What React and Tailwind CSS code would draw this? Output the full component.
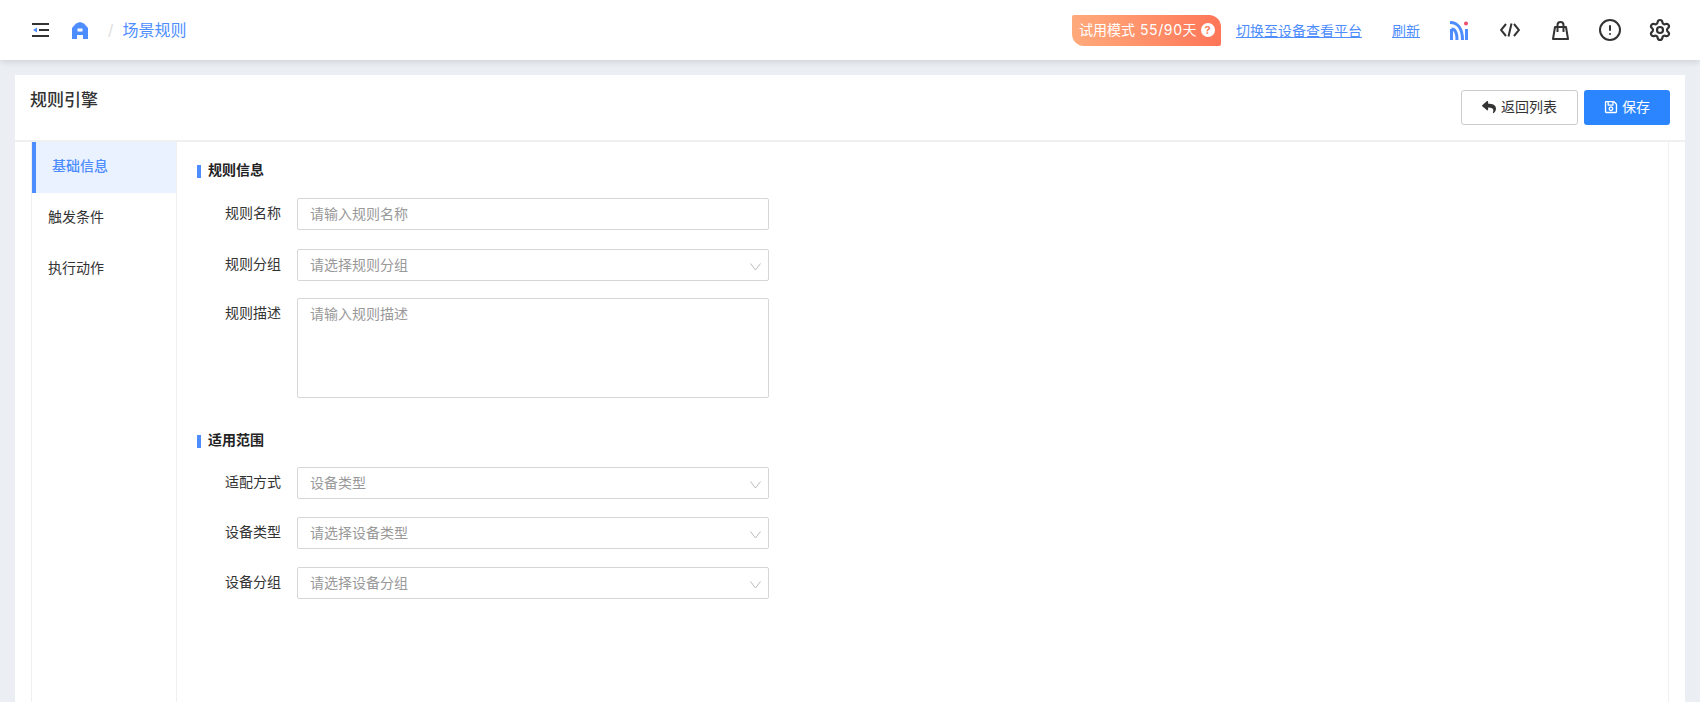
import { Settings, CircleAlert } from "lucide-react";
import { FaReply, FaRegSave } from "react-icons/fa";

const fontStyle = "font-['Inter','Noto_Sans_CJK_SC','Noto_Sans',sans-serif]";

const Field = ({ label, placeholder, select, className }) => (
  <div className={`flex items-start ${className}`}>
    <label className="w-[265px] pr-[16px] text-right text-[14px] leading-[30px] text-[#333]">{label}</label>
    <div className="relative w-[472px] h-[32px] border border-[#d6d6d6] rounded-[2px] pl-[12px] text-[14px] leading-[30px] text-[#999]">
      {placeholder}
      {select && (
        <svg className="absolute right-[7px] top-[13px]" width="11" height="8" viewBox="0 0 11 8" fill="none">
          <path d="M0.5 0.5 L5.5 7 L10.5 0.5" stroke="#bbb" strokeWidth="1" />
        </svg>
      )}
    </div>
  </div>
);

const SectionTitle = ({ children, className }) => (
  <div className={`flex items-center h-[20px] pl-[165px] text-[14px] font-bold text-[#222] ${className}`}>
    <span className="w-[4px] h-[13px] bg-[#4d8dff] mr-[7px]" />
    <span className="-mt-[3px]">{children}</span>
  </div>
);

export default function App() {
  return (
    <div className={`${fontStyle} h-[702px] overflow-hidden bg-[#ebeef3]`}>
      {/* top bar */}
      <header className="h-[60px] bg-white flex items-center shadow-[0_2px_6px_rgba(0,0,0,0.12)] relative">
        <svg className="ml-[32px]" width="17" height="14" viewBox="0 0 17 14">
          <rect x="0" y="0" width="17" height="2" fill="#333" />
          <rect x="7" y="6" width="10" height="2" fill="#333" />
          <rect x="0" y="12" width="17" height="2" fill="#333" />
          <path d="M1 7 L5 4.5 V9.5 Z" fill="#4d8dff" />
        </svg>
        <svg className="ml-[23px]" width="16" height="17" viewBox="0 0 16 17">
          <path fillRule="evenodd" d="M8 0 L12 1.5 L16 6 V17 H11 V13 H5 V17 H0 V6 L4 1.5 Z M5.5 6.5 H10.5 V9.5 H5.5 Z" fill="#4d8dff" />
        </svg>
        <span className="ml-[20px] text-[#ddd] text-[15px]">/</span>
        <span className="ml-[9px] text-[16px] text-[#4d8dff]">场景规则</span>

        <div className="ml-auto flex items-center">
          <div className="h-[31px] w-[149px] flex items-center pl-[7px] pb-[1px] rounded-tl-[2px] rounded-tr-[12px] rounded-bl-[12px] rounded-br-[2px] bg-gradient-to-r from-[#ffaa7c] to-[#ff7558] text-white text-[14px] whitespace-nowrap">
            试用模式<span className="ml-[5px] tracking-[0.6px]">55/90</span>天
            <span className="ml-[4px] w-[14px] h-[14px] rounded-full bg-white text-[#ff7e60] text-[11px] leading-[14px] font-bold text-center">?</span>
          </div>
          <a className="ml-[15px] text-[14px] text-[#4d8dff] underline">切换至设备查看平台</a>
          <a className="ml-[30px] text-[14px] text-[#4d8dff] underline">刷新</a>
          <svg className="ml-[30px]" width="18" height="19" viewBox="0 0 18 19" fill="none">
            <path d="M1.5 19 V8" stroke="#4d8dff" strokeWidth="3" />
            <path d="M0 1.5 C8 1.5 12.5 8 12.5 19" stroke="#4d8dff" strokeWidth="3" />
            <path d="M1.5 8 C5 8 7 12 7 19" stroke="#4d8dff" strokeWidth="3" />
            <path d="M16.5 8 V19" stroke="#4d8dff" strokeWidth="3" />
            <circle cx="16" cy="2.5" r="2" fill="#ef4d6c" />
          </svg>
          <svg className="ml-[32px]" width="20" height="14" viewBox="0 0 20 14" fill="none" stroke="#333" strokeWidth="2">
            <path d="M6 1 L1 7 L6 13" />
            <path d="M14 1 L19 7 L14 13" />
            <path d="M11.5 0.5 L8.5 13.5" />
          </svg>
          <svg className="ml-[32px]" width="17" height="19" viewBox="0 0 17 19" fill="none" stroke="#333" strokeWidth="2">
            <path d="M3 6 H14 L16 18 H1 Z" strokeLinejoin="round" />
            <path d="M5.5 11 V4 Q5.5 1 8.5 1 Q11.5 1 11.5 4 V11" />
          </svg>
          <CircleAlert className="ml-[29px] text-[#333]" size={24} strokeWidth={2} />
          <Settings className="ml-[26px] mr-[28px] text-[#333]" size={24} strokeWidth={2.2} />
        </div>
      </header>

      {/* card */}
      <main className="mt-[15px] mx-[15px] bg-white h-[627px]">
        <div className="h-[67px] flex items-start justify-between border-b-2 border-[#f0f0f0]">
          <h2 className="ml-[15px] mt-[13px] text-[17px] leading-[24px] font-medium text-[#333]">规则引擎</h2>
          <div className="flex mt-[15px] mr-[15px] gap-[6px]">
            <button className="w-[117px] h-[35px] pb-[2px] flex items-center justify-center gap-[5px] border border-[#ccc] rounded-[3px] text-[14px] text-[#333]">
              <FaReply size={14} />返回列表
            </button>
            <button className="w-[86px] h-[35px] pb-[2px] flex items-center justify-center gap-[4px] bg-[#2b85ff] rounded-[3px] text-[14px] text-white">
              <FaRegSave size={14} />保存
            </button>
          </div>
        </div>
        <div className="flex mx-[16px] border-x border-[#eef0f4] h-[560px]">
          <aside className="w-[145px] border-r border-[#eef0f4] shrink-0 text-[14px] text-[#333]">
            <div className="h-[51px] bg-[#ebf2ff] border-l-[4px] border-[#4d8dff] pl-[16px] leading-[48px] text-[#4d8dff] font-medium">基础信息</div>
            <div className="h-[51px] pl-[16px] leading-[48px]">触发条件</div>
            <div className="h-[51px] pl-[16px] leading-[48px]">执行动作</div>
          </aside>
          <section className="flex-1 -ml-[145px] pt-[19px]">
            <SectionTitle>规则信息</SectionTitle>
            <Field className="mt-[17px]" label="规则名称" placeholder="请输入规则名称" />
            <Field className="mt-[19px]" label="规则分组" placeholder="请选择规则分组" select />
            <div className="flex items-start mt-[17px]">
              <label className="w-[265px] pr-[16px] text-right text-[14px] leading-[30px] text-[#333]">规则描述</label>
              <div className="w-[472px] h-[100px] border border-[#d6d6d6] rounded-[2px] pl-[12px] text-[14px] leading-[30px] text-[#999]">请输入规则描述</div>
            </div>
            <SectionTitle className="mt-[33px]">适用范围</SectionTitle>
            <Field className="mt-[16px]" label="适配方式" placeholder="设备类型" select />
            <Field className="mt-[18px]" label="设备类型" placeholder="请选择设备类型" select />
            <Field className="mt-[18px]" label="设备分组" placeholder="请选择设备分组" select />
          </section>
        </div>
      </main>
    </div>
  );
}
